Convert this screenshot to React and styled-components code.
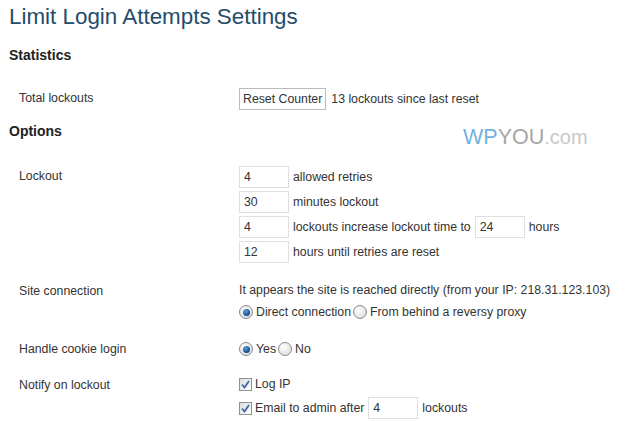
import styled, { createGlobalStyle } from 'styled-components'

const GlobalStyle = createGlobalStyle`
  body {
    margin: 0;
    background: #fff;
    font-family: 'Liberation Sans', Arial, sans-serif;
    font-size: 12.3px;
    color: #333;
  }
`

const Page = styled.div`
  position: relative;
  width: 626px;
  height: 421px;
  overflow: hidden;
  padding-left: 9px;
  box-sizing: border-box;
`

const Title = styled.h2`
  margin: 0;
  padding-top: 2px;
  font-size: 22.4px;
  line-height: 29px;
  font-weight: normal;
  color: #1f4d6b;
`

const Heading = styled.h3`
  margin: 0;
  padding-top: ${p => p.$top}px;
  font-size: 14px;
  line-height: 17px;
  font-weight: bold;
  color: #222;
`

const Row = styled.div`
  display: grid;
  grid-template-columns: 230px 1fr;
  padding-top: ${p => p.$top}px;
`

const Label = styled.div`
  padding-left: 10px;
  padding-top: ${p => p.$top || 0}px;
  line-height: 16px;
`

const Field = styled.div`
  display: flex;
  flex-direction: column;
  gap: ${p => p.$gap || 0}px;
`

const Line = styled.div`
  display: flex;
  align-items: center;
  height: 22px;
  white-space: nowrap;
`

const Button = styled.button`
  height: 22px;
  padding: 0 3px;
  margin-right: 5px;
  border: 1px solid #bbb;
  background: #fff;
  font: inherit;
  color: #333;
`

const TextInput = styled.input`
  width: 50px;
  height: 22px;
  box-sizing: border-box;
  padding: 0 4px;
  margin-right: 4px;
  margin-left: ${p => p.$ml || 0}px;
  border: 1px solid #dfdfdf;
  font: inherit;
  color: #333;
  outline: none;
`

const RadioDot = styled.span`
  display: inline-block;
  width: 12px;
  height: 12px;
  border-radius: 50%;
  border: 1px solid #8a8a8a;
  background: radial-gradient(circle at 40% 35%, #fff 0%, #e6e6e6 60%, #cfcfcf 100%);
  margin-right: 3px;
  position: relative;
  &::after {
    content: '';
    display: ${p => (p.$on ? 'block' : 'none')};
    position: absolute;
    left: 2.5px;
    top: 2.5px;
    width: 7px;
    height: 7px;
    border-radius: 50%;
    background: radial-gradient(circle at 40% 35%, #5aa0e0 0%, #1f5c9a 55%, #0d2f55 100%);
  }
`

const Box = styled.span`
  display: inline-flex;
  align-items: center;
  justify-content: center;
  width: 11px;
  height: 11px;
  border: 1px solid #8e8f8f;
  background: linear-gradient(135deg, #dcdcdc, #fff);
  margin-right: 3px;
`

const Opt = styled.span`
  margin-right: 2px;
`

const Watermark = styled.div`
  position: absolute;
  left: 463px;
  top: 125px;
  font-size: 21.5px;
  line-height: 24px;
  color: #a6a6a6;
  b { font-weight: normal; color: #72b2e2; }
  i { font-style: normal; color: #c8c8c8; font-size: 20px; }
`

const Radio = ({ on, children }) => (
  <>
    <RadioDot $on={on} />
    <Opt>{children}</Opt>
  </>
)

const Check = ({ children }) => (
  <>
    <Box>
      <svg width="9" height="9" viewBox="0 0 9 9">
        <path d="M1 4.5 L3.5 7.5 L8 1" fill="none" stroke="#3f64a8" strokeWidth="1.8" />
      </svg>
    </Box>
    <Opt>{children}</Opt>
  </>
)

export default function App() {
  return (
    <Page>
      <GlobalStyle />
      <Title>Limit Login Attempts Settings</Title>
      <Heading $top={16}>Statistics</Heading>

      <Row $top={24}>
        <Label $top={2}>Total lockouts</Label>
        <Field>
          <Line>
            <Button>Reset Counter</Button>13 lockouts since last reset
          </Line>
        </Field>
      </Row>

      <Heading $top={13}>Options</Heading>

      <Row $top={26}>
        <Label $top={2}>Lockout</Label>
        <Field $gap={3}>
          <Line><TextInput defaultValue="4" />allowed retries</Line>
          <Line><TextInput defaultValue="30" />minutes lockout</Line>
          <Line>
            <TextInput defaultValue="4" />lockouts increase lockout time to
            <TextInput $ml={4} defaultValue="24" />hours
          </Line>
          <Line><TextInput defaultValue="12" />hours until retries are reset</Line>
        </Field>
      </Row>

      <Row $top={16}>
        <Label $top={4}>Site connection</Label>
        <Field>
          <Line>It appears the site is reached directly (from your IP: 218.31.123.103)</Line>
          <Line>
            <Radio on>Direct connection</Radio>
            <Radio>From behind a reversy proxy</Radio>
          </Line>
        </Field>
      </Row>

      <Row $top={15}>
        <Label $top={3}>Handle cookie login</Label>
        <Field>
          <Line>
            <Radio on>Yes</Radio>
            <Radio>No</Radio>
          </Line>
        </Field>
      </Row>

      <Row $top={13}>
        <Label $top={4}>Notify on lockout</Label>
        <Field $gap={2}>
          <Line>
            <Check>Log IP</Check>
          </Line>
          <Line>
            <Check>Email to admin after</Check>
            <TextInput $ml={2} defaultValue="4" />lockouts
          </Line>
        </Field>
      </Row>

      <Watermark>
        <b>WP</b>YOU<i>.com</i>
      </Watermark>
    </Page>
  )
}
